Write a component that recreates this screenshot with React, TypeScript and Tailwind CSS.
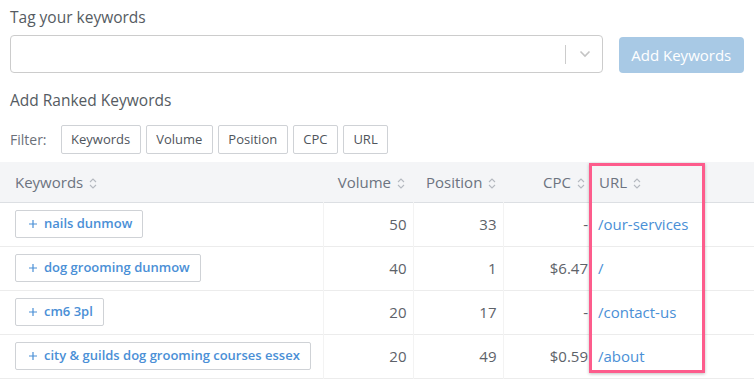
import React from 'react';

interface Row {
  keyword: string;
  volume: number;
  position: number;
  cpc: string;
  url: string;
}

const rows: Row[] = [
  { keyword: 'nails dunmow', volume: 50, position: 33, cpc: '-', url: '/our-services' },
  { keyword: 'dog grooming dunmow', volume: 40, position: 1, cpc: '$6.47', url: '/' },
  { keyword: 'cm6 3pl', volume: 20, position: 17, cpc: '-', url: '/contact-us' },
  { keyword: 'city & guilds dog grooming courses essex', volume: 20, position: 49, cpc: '$0.59', url: '/about' },
];

const filters = ['Keywords', 'Volume', 'Position', 'CPC', 'URL'];

function SortIcon() {
  return (
    <svg width="8" height="11" viewBox="0 0 8 11" className="ml-[6px] inline-block" fill="none" stroke="#b5b9c0" strokeWidth="1.1">
      <path d="M1 4 L4 1 L7 4" />
      <path d="M1 7 L4 10 L7 7" />
    </svg>
  );
}

export default function App() {
  return (
    <div className="relative w-[754px] h-[382px] overflow-hidden bg-white text-[#555b62]" style={{ fontFamily: '"Open Sans", sans-serif' }}>
      <div className="px-[10px] pt-[7px]">
        <h2 className="text-[15.5px] leading-[20px]">Tag your keywords</h2>
        <div className="mt-[8px] flex items-end gap-[16px]">
          <div className="flex h-[38px] w-[595px] items-center justify-end rounded-[4px] border border-[#cccccc]">
            <span className="h-[19px] w-px bg-[#cccccc]" />
            <svg width="12" height="8" viewBox="0 0 12 8" className="ml-[13px] mr-[11px]" fill="none" stroke="#c4c4c4" strokeWidth="1.6">
              <path d="M1.5 1.5 L6 6 L10.5 1.5" />
            </svg>
          </div>
          <button className="h-[36px] w-[126px] rounded-[4px] bg-[#a8c9e5] text-[15px] text-white">Add Keywords</button>
        </div>
        <h2 className="mt-[17px] text-[15.5px] leading-[20px]">Add Ranked Keywords</h2>
        <div className="mt-[15px] flex items-center gap-[5px]">
          <span className="mr-[9px] text-[14px] text-[#6b7079]">Filter:</span>
          {filters.map((f) => (
            <button key={f} className="h-[29px] rounded-[2px] border border-[#cfd2d6] px-[9.5px] text-[13px] text-[#4f555c]">
              {f}
            </button>
          ))}
        </div>
      </div>

      <table className="mt-[8px] w-full border-collapse table-fixed">
        <colgroup>
          <col className="w-[323px]" />
          <col className="w-[90px]" />
          <col className="w-[90px]" />
          <col className="w-[90px]" />
          <col />
        </colgroup>
        <thead>
          <tr className="h-[40px] bg-[#f4f5f7] border-b border-[#dcdfe3] text-[15px] text-[#6c7380]">
            <th className="pl-[15px] text-left font-normal">Keywords<SortIcon /></th>
            <th className="pr-[8px] text-right font-normal">Volume<SortIcon /></th>
            <th className="pl-[13px] text-left font-normal">Position<SortIcon /></th>
            <th className="pr-[8px] text-right font-normal">CPC<SortIcon /></th>
            <th className="pl-[6px] text-left font-normal">URL<SortIcon /></th>
          </tr>
        </thead>
        <tbody>
          {rows.map((r) => (
            <tr key={r.keyword} className="h-[44px] border-b border-[#ececec] text-[15px]">
              <td className="pl-[15px]">
                <button className="flex h-[28px] items-center rounded-[2px] border border-[#cfd2d6] pl-[13px] pr-[10px] text-[13px] font-semibold text-[#4a8fd6]">
                  <svg width="8" height="8" viewBox="0 0 8 8" className="mr-[7px]" fill="none" stroke="#4a8fd6" strokeWidth="1.2">
                    <path d="M4 0 V8 M0 4 H8" />
                  </svg>
                  {r.keyword}
                </button>
              </td>
              <td className="border-l border-[#f3f3f3] pr-[6px] text-right text-[#5d6269]">{r.volume}</td>
              <td className="border-l border-[#f3f3f3] pr-[6px] text-right text-[#5d6269]">{r.position}</td>
              <td className="border-l border-[#f3f3f3] pr-[5px] text-right text-[#5d6269]">{r.cpc}</td>
              <td className="pl-[5px] text-[#4a8fd6]">{r.url}</td>
            </tr>
          ))}
        </tbody>
      </table>

      <div className="pointer-events-none absolute left-[589px] top-[163px] h-[210px] w-[116px] border-[3px] border-[#fd5c8c] shadow-[0_1px_3px_rgba(0,0,0,0.25)]" />
    </div>
  );
}
